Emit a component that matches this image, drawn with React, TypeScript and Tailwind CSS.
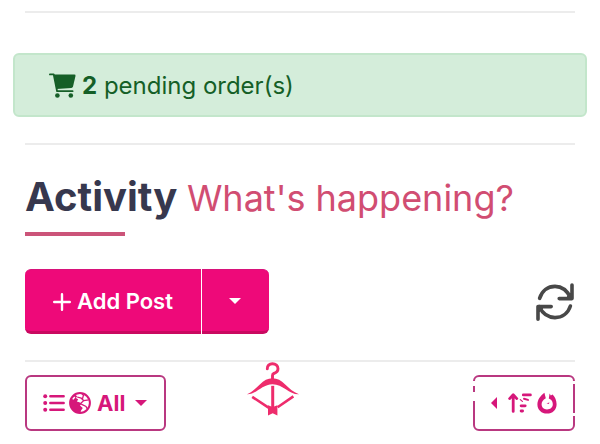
import React from 'react';

const CartIcon = () => (
  <svg className="w-[27px] h-[25px]" viewBox="0 0 27 25" fill="none" aria-hidden="true">
    <path d="M0.9 1.4H4.7L8.1 18.2H23.6" stroke="currentColor" strokeWidth="1.8" strokeLinecap="round" strokeLinejoin="round" />
    <path d="M4.9 1.6H25.4Q26.8 1.6 26.5 3L24 13.6Q23.6 14.9 22.3 15L7.4 16Z" fill="currentColor" />
    <circle cx="8.4" cy="22.5" r="2.3" fill="currentColor" />
    <circle cx="21.8" cy="22.5" r="2.3" fill="currentColor" />
  </svg>
);

const PlusIcon = () => (
  <svg className="w-[18px] h-[18px]" viewBox="0 0 18 18" stroke="currentColor" strokeWidth="2.4" strokeLinecap="round" aria-hidden="true">
    <path d="M9 1.2V16.8M1.2 9H16.8" />
  </svg>
);

const CaretDown = () => (
  <svg className="w-3 h-[6px]" viewBox="0 0 12 6" fill="currentColor" aria-hidden="true">
    <path d="M0 0H12L6 6Z" />
  </svg>
);

const RefreshIcon = () => (
  <svg
    className="w-[38px] h-[38px]"
    viewBox="0 0 38 38"
    fill="none"
    stroke="currentColor"
    strokeWidth="3.6"
    strokeLinecap="round"
    strokeLinejoin="round"
    aria-hidden="true"
  >
    <path d="M3.6 15.4C6 7.6 12 3.4 19 3.4C26 3.4 31.5 8 34.8 15.2" />
    <path d="M36 2V15.6H23.2" />
    <path d="M34.4 23C32 30.6 26 34.6 19 34.6C12 34.6 6.5 30.6 3.2 23.6" />
    <path d="M2 36.2V23.6H15.2" />
    <path d="M30.5 14.5L35.5 9.5V14.5ZM7.5 24.5L2.5 29.5V24.5Z" fill="currentColor" strokeWidth="1" />
  </svg>
);

const ListIcon = () => (
  <svg className="w-[22px] h-[18px]" viewBox="0 0 22 18" fill="currentColor" aria-hidden="true">
    <circle cx="2.2" cy="2.2" r="2" />
    <circle cx="2.2" cy="9" r="2" />
    <circle cx="2.2" cy="15.8" r="2" />
    <path d="M7.4 2.2H20.6M7.4 9H20.6M7.4 15.8H20.6" stroke="currentColor" strokeWidth="2.6" strokeLinecap="round" />
  </svg>
);

const GlobeIcon = () => (
  <svg className="w-[22px] h-[22px]" viewBox="0 0 22 22" aria-hidden="true">
    <circle cx="11" cy="11" r="9.9" fill="white" stroke="currentColor" strokeWidth="2" />
    <path
      d="M1.2 11C1.2 7.5 3 4.2 6 2.5L8.2 4.2L7 6L9.2 7.5L7.8 9.4L10.4 10.2L12.6 11.8L11 13.6L13.8 16L12 18.4L11.6 20.8C5.6 21 1.2 16.8 1.2 11Z"
      fill="currentColor"
    />
    <path d="M11 12L14.8 8.6L19.8 7.8M14.6 8.5L12.2 6.2L8.2 5M13.4 7L14.4 3.4L13 1.6M12.2 12.2L17 14.4L18.3 17" fill="none" stroke="currentColor" strokeWidth="1.3" />
    <path d="M3.2 7L5.2 4.6L6.4 5.6L4.4 7.8Z" fill="white" />
  </svg>
);

const HangerLogo = () => (
  <svg className="w-[54px] h-[54px]" viewBox="0 0 54 54" fill="none" aria-hidden="true">
    <path d="M21.3 6.8C21.1 3.8 23.4 1.8 26.4 1.8C29.7 1.8 32 3.8 32 6.8C32 9.4 30.3 10.7 27.8 11.5C26.8 11.8 26.5 12.4 26.5 13.6V18" stroke="currentColor" strokeWidth="2.9" strokeLinecap="round" />
    <path
      d="M1 32.3C6.5 29.8 9.8 26.2 13.8 22.4C18 18.3 21.6 16.2 26.5 16.2C31.4 16.2 35 18.3 39.2 22.4C43.2 26.2 47 29.8 53 32.3C43.5 32.8 37 22.2 26.5 22.2C16 22.2 10 32.8 1 32.3Z"
      fill="currentColor"
    />
    <path d="M6.2 34.8L22.5 45.6M47.4 34.4L31.6 45.2" stroke="currentColor" strokeWidth="2.6" />
    <path d="M26.7 23.8V45" stroke="currentColor" strokeWidth="3" />
    <path d="M22 43.3L26.7 45L31.4 43.3V53.4L26.7 51.2L22 53.4Z" fill="currentColor" />
  </svg>
);

const CaretLeft = () => (
  <svg className="w-[6px] h-3" viewBox="0 0 6 12" fill="currentColor" aria-hidden="true">
    <path d="M6 0V12L0 6Z" />
  </svg>
);

const SortIcon = () => (
  <svg className="w-6 h-5" viewBox="0 0 24 20" fill="none" stroke="currentColor" strokeWidth="2.8" strokeLinecap="round" strokeLinejoin="round" aria-hidden="true">
    <path d="M5.2 18.4V2.4M1.6 5.6L5.2 1.8L8.8 5.6" />
    <path d="M15.3 1.9H22.4M13.1 12.8H17.2M13.1 18H14.6" />
    <path d="M16 5.8L20 6.9" strokeWidth="2" />
    <path d="M12.3 6.6L14.4 8.4" strokeWidth="1.2" />
  </svg>
);

const FlameIcon = () => (
  <svg className="w-5 h-[22px]" viewBox="0 0 20 22" fill="none" aria-hidden="true">
    <path
      d="M7.4 0.8C3.2 4 0.4 8 0.4 12.4C0.4 17.8 4.6 21.6 10 21.6C15.5 21.6 19.6 17.8 19.6 12.2C19.6 8.4 18 4.8 15.6 2.4L13.8 3.4L12.6 1.4L11.8 6.6L14 7.8C15.2 9 15.8 10.6 15.8 12.2C15.8 15.4 13.3 17.4 10 17.4C6.7 17.4 4.6 15.3 4.6 12.3C4.6 9.8 6 7.7 8.8 6.2Z"
      fill="currentColor"
    />
    <path d="M9.5 11.2L12.5 10.6L11.8 12Z" fill="currentColor" />
  </svg>
);

const App: React.FC = () => {
  return (
    <main className="bg-white px-[25px] pt-[11px] font-['Inter',sans-serif]">
      <hr className="border-t-2 border-[#ececec]" />

      {/* Pending orders alert */}
      <div role="status" className="-mx-3 mt-10 flex h-16 items-center gap-[6px] rounded-md border-2 border-[#c3e6cb] bg-[#d4edda] px-[34px] text-2xl text-[#155f27]">
        <CartIcon />
        <p className="pt-[2px]"><strong className="font-bold">2</strong> pending order(s)</p>
      </div>

      <hr className="mt-[26px] border-t-2 border-[#ececec]" />

      {/* Section title */}
      <h1 className="mt-7 whitespace-nowrap text-[40px] leading-[48px] font-bold text-[#37384e]">
        Activity <small className="text-4xl leading-[48px] font-normal text-[#d14d72]">What's happening?</small>
      </h1>
      <div className="mt-[10px] h-1 w-[100px] bg-[#cb5479]"></div>

      <div className="mt-[33px] flex items-center justify-between">
        <div className="flex h-[65px] text-white">
          <button className="flex items-center gap-[6px] rounded-l-md border-t border-b-3 border-t-[#d8127a] border-b-[#c90960] bg-[#ee0979] px-7 pt-[2px] text-[22px] font-semibold">
            <PlusIcon />
            Add Post
          </button>
          <button aria-label="More post options" className="ml-px flex w-[67px] items-center justify-center rounded-r-md border-t border-b-3 border-t-[#d8127a] border-b-[#c90960] bg-[#ee0979]">
            <CaretDown />
          </button>
        </div>
        <button aria-label="Refresh" className="mr-px text-[#484848]">
          <RefreshIcon />
        </button>
      </div>

      <hr className="mt-[26px] border-t-2 border-[#ececec]" />

      {/* Filter and sort bar */}
      <div className="flex items-start justify-between text-[#d6177a]">
        <button className="mt-[13px] flex h-14 w-[141px] items-center rounded-md border-2 border-[#b93880] pl-4 text-[22px] font-bold">
          <ListIcon />
          <span className="ml-1"><GlobeIcon /></span>
          <span className="ml-[6px]">All</span>
          <span className="ml-[10px]"><CaretDown /></span>
        </button>
        <a href="#" aria-label="Home" className="mr-[94px] text-[#ee2c6c]">
          <HangerLogo />
        </a>
        <button aria-label="Sort by popularity" className="relative mt-[13px] flex h-14 w-[102px] items-center rounded-md border-2 border-[#b93880] pl-4">
          <CaretLeft />
          <span className="ml-[11px]"><SortIcon /></span>
          <span className="ml-[5px]"><FlameIcon /></span>
          {/* Breaks in the outline */}
          <span className="absolute -left-[2px] top-1 h-[5px] w-[2px] bg-white"></span>
          <span className="absolute -left-[2px] top-[15px] h-[9px] w-[2px] bg-white"></span>
          <span className="absolute -right-[2px] top-1 h-[3px] w-[2px] bg-white"></span>
          <span className="absolute -right-[2px] top-9 h-[3px] w-[2px] bg-white"></span>
        </button>
      </div>
    </main>
  );
};

export default App;
